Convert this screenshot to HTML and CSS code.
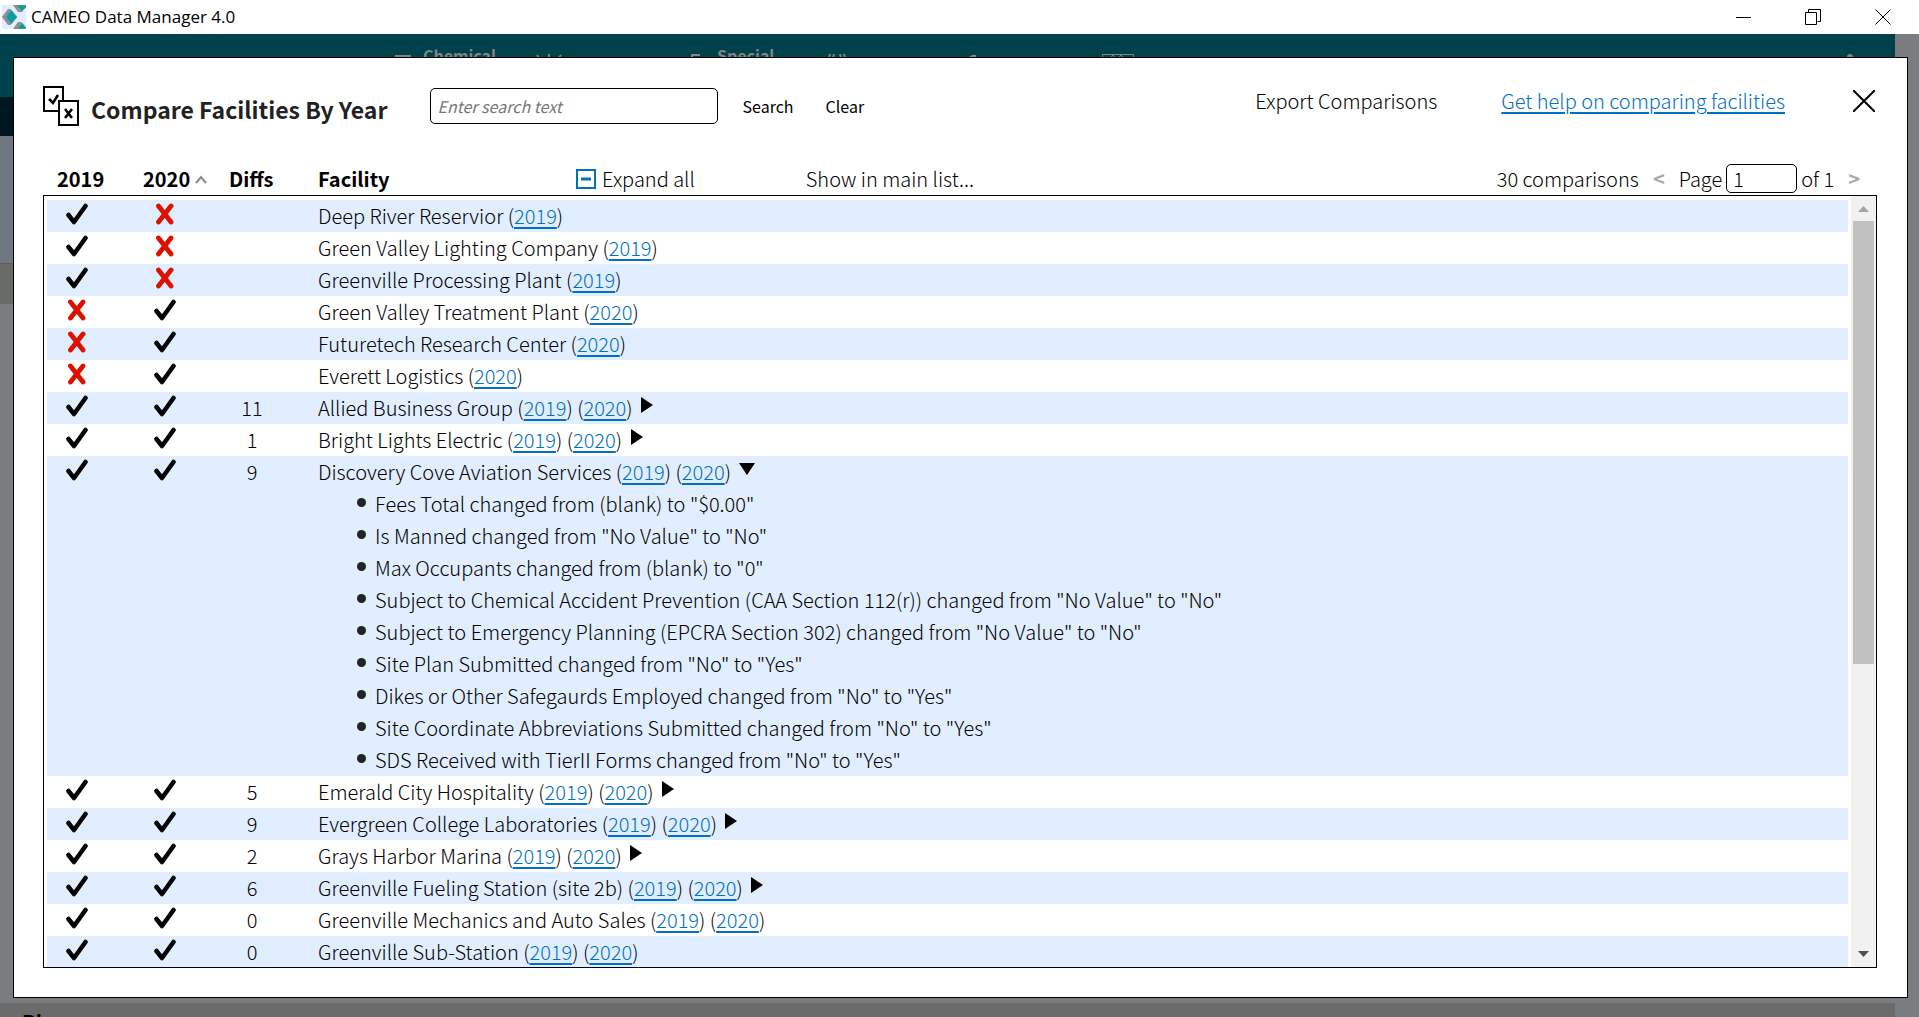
FILE: index.html
```
<!DOCTYPE html>
<html lang="en">
<head>
    <meta charset="UTF-8">
    <meta name="viewport" content="width=device-width, initial-scale=1.0">
    <title>CAMEO Data Manager 4.0</title>
    <link rel="stylesheet" href="styles.css">
</head>
<body>
    <header class="titlebar">
        <svg class="app-icon" width="24" height="24" viewBox="0 0 24 24" aria-hidden="true">
            <rect width="24" height="24" fill="#dfeeff"/>
            <path d="M6 4h3L4 12l5 8H6L0 12z" fill="#8a8f92"/>
            <path d="M9 5l6 7-6 7-5-7z" fill="#00a0a8" stroke="#7d8a8c"/>
            <path d="M11 0h3l4 5h3l-1 2h-4z" fill="#8a8f92"/>
            <path d="M14 0h10v2l-4 4z" fill="#00a0a8" stroke="#7d8a8c"/>
            <path d="M11 24l5-7h4l-5 7z" fill="#8a8f92"/>
            <path d="M15 24l5-6 4 5v1z" fill="#00a0a8" stroke="#7d8a8c"/>
        </svg>
        <span class="app-name">CAMEO Data Manager 4.0</span>
        <div class="window-buttons">
            <button type="button" aria-label="Minimize"><svg width="15" height="16" viewBox="0 0 15 16"><path d="M0 8.5h15" stroke="#000"/></svg></button>
            <button type="button" aria-label="Restore"><svg width="16" height="16" viewBox="0 0 16 16" fill="none" stroke="#000"><path d="M.5 3.500h11v12H.5zM3.500 3.500V.5h12v12h-3"/></svg></button>
            <button type="button" aria-label="Close window"><svg width="16" height="16" viewBox="0 0 16 16" stroke="#000"><path d="M.5.5l15 15M15.500.5l-15 15"/></svg></button>
        </div>
    </header>

    <main class="backdrop">
        <div class="page-nav">
            <svg width="16" height="16" viewBox="0 0 16 16" fill="none" stroke="#848484" stroke-width="2"><path d="M1 2h14v13H1z"/></svg>
            <span class="nav-name chemical">Chemical</span>
            <svg class="alert" width="28" height="20" viewBox="0 0 28 20" fill="none" stroke="#848484" stroke-width="2"><path d="M2 1l6 8M14 0v7M26 1l-6 8"/></svg>
            <svg class="flag" width="10" height="18" viewBox="0 0 10 18" fill="none" stroke="#848484" stroke-width="2"><path d="M1 18V1h8M1 6h6"/></svg>
            <span class="nav-name special">Special</span>
            <svg class="signal" width="20" height="18" viewBox="0 0 20 18" fill="none" stroke="#848484" stroke-width="2"><path d="M3 0L1 8M7 0L5 8M13 0l2 8M17 0l2 8M10 3v6"/></svg>
            <svg class="pen" width="10" height="18" viewBox="0 0 10 18" fill="#848484"><path d="M0 5l6-4h4v10H0z"/></svg>
            <svg class="map" width="32" height="20" viewBox="0 0 32 20" fill="none" stroke="#848484"><path d="M.5.5h31v19H.5zM7 6l4-5 4 5 4-5 4 5"/></svg>
            <svg class="user" width="6" height="12" viewBox="0 0 6 12" fill="#848484"><circle cx="3" cy="3" r="3"/></svg>
        </div>
        <div class="page-subnav"></div>
        <div class="page-side"></div>
        <div class="page-row"></div>
        <div class="page-footer"><b>Ri</b></div>

        <section class="modal">
            <div class="modal-head">
                <svg class="compare-icon" width="36" height="40" viewBox="0 0 36 40" fill="none" stroke="#000" stroke-width="2">
                    <path d="M1 1h19v24H1z"/>
                    <path d="M16 15h19v24H16z" fill="#fff"/>
                    <path d="M6 13l4 4 5-8M22 23l7 9M29 23l-7 9" stroke-width="2.500"/>
                </svg>
                <h1>Compare Facilities By Year</h1>
                <form class="search">
                    <input type="text" placeholder="Enter search text" aria-label="Search text">
                    <button type="button">Search</button>
                    <button type="button">Clear</button>
                </form>
                <div class="head-links">
                    <button type="button">Export Comparisons</button>
                    <a href="#">Get help on comparing facilities</a>
                    <button type="button" aria-label="Close"><svg width="22" height="22" viewBox="0 0 22 22" stroke="#000" stroke-width="2"><path d="M0 0l22 22M22 0L0 22"/></svg></button>
                </div>
            </div>

            <div class="toolbar">
                <b class="col-year">2019</b>
                <b class="col-year">2020 <svg width="12" height="9" viewBox="0 0 12 9" fill="none" stroke="#888" stroke-width="2"><path d="M1 8l5-6 5 6"/></svg></b>
                <b class="col-diffs">Diffs</b>
                <b class="col-facility">Facility</b>
                <button type="button" class="expand"><svg width="20" height="20" viewBox="0 0 20 20" fill="none" stroke="#0071bc" stroke-width="2"><path d="M1 1h18v18H1z"/><path d="M5 10h10" stroke-width="3"/></svg>Expand all</button>
                <button type="button">Show in main list...</button>
                <div class="pager">
                    <span class="count">30 comparisons</span>
                    <button type="button" class="step">&lt;</button>
                    <label for="page">Page</label>
                    <input type="text" id="page" value="1">
                    <span>of 1</span>
                    <button type="button" class="step">&gt;</button>
                </div>
            </div>

            <div class="list">
                <div class="rows">
                    <table>
                        <tbody id="facilities"></tbody>
                    </table>
                </div>
                <div class="scrollbar">
                    <svg width="11" height="6" viewBox="0 0 11 6"><path d="M5.500 0L11 6H0z" fill="#a3a3a3"/></svg>
                    <div class="thumb"></div>
                    <svg width="11" height="6" viewBox="0 0 11 6"><path d="M0 0h11L5.500 6z" fill="#505050"/></svg>
                </div>
            </div>
        </section>
    </main>

    <script src="script.js"></script>
</body>
</html>
```
FILE: styles.css
```
* {
    box-sizing: border-box;
}
body {
    margin: 0;
    height: 100vh;
    display: flex;
    flex-direction: column;
    overflow: hidden;
    font-family: "Noto Sans CJK SC", "Source Sans Pro", sans-serif;
    font-size: 20px;
    font-weight: 300;
    line-height: 32px;
    color: #000;
}
b {
    font-weight: 700;
}
button {
    font: inherit;
    color: #000;
    background: none;
    border: 0;
    padding: 0;
    cursor: pointer;
}
svg {
    flex: none;
}
a {
    color: #0071c4;
    text-decoration-thickness: 2px;
    text-underline-offset: 3px;
}

/* window frame */
.titlebar {
    height: 34px;
    flex: none;
    display: flex;
    align-items: center;
    padding: 0 10px 0 2px;
    background: #fff;
}
.app-name {
    margin-left: 5px;
    font-family: "Open Sans", "Noto Sans", sans-serif;
    font-size: 17px;
    font-weight: 400;
    color: #000;
}
.window-buttons {
    margin-left: auto;
    display: flex;
    gap: 18px;
}
.window-buttons button {
    width: 52px;
    height: 32px;
    display: flex;
    align-items: center;
    justify-content: center;
}

/* dimmed page behind the dialog */
.backdrop {
    flex: 1;
    min-height: 0;
    position: relative;
    display: flex;
    flex-direction: column;
    background: #7a7d80;
}
.page-nav {
    flex: none;
    height: 63px;
    margin-right: 24px;
    padding: 20px 42px 0 395px;
    display: flex;
    align-items: flex-start;
    background: #00414b;
}
.nav-name {
    width: 72px;
    margin-top: -15px;
    font-weight: bold;
    font-size: 16px;
    color: #848484;
}
.chemical {
    margin-left: 12px;
}
.alert {
    margin-left: 40px;
}
.flag {
    margin-left: 128px;
}
.special {
    margin-left: 16px;
}
.signal {
    margin-left: 38px;
}
.pen {
    margin-left: 119px;
}
.map {
    margin-left: 126px;
}
.user {
    margin-left: auto;
}
.page-subnav {
    flex: none;
    height: 39px;
    margin-right: 24px;
    background: #001722;
}
.page-side {
    flex: none;
    height: 127px;
    margin-right: 24px;
    background: #6f7780;
}
.page-row {
    flex: none;
    height: 41px;
    margin-right: 24px;
    border-top: 1px solid #5c5e5e;
    background: #696b69;
}
.page-footer {
    flex: none;
    height: 14px;
    margin-top: auto;
    margin-right: 24px;
    padding: 3px 22px;
    overflow: hidden;
    background: #6a6b6a;
}

/* dialog */
.modal {
    position: absolute;
    inset: 23px 11px 19px 13px;
    display: flex;
    flex-direction: column;
    padding: 0 30px 29px 29px;
    background: #fff;
    border: 1px solid #000;
}
.modal-head {
    display: flex;
    align-items: center;
    height: 96px;
}
h1 {
    margin: 6px 43px 0 12px;
    font-size: 23px;
    line-height: 32px;
    color: #222;
}
.search {
    display: flex;
    align-items: center;
    gap: 32px;
    font-size: 16px;
    font-weight: 400;
}
input {
    font: inherit;
    border: 1px solid #000;
    border-radius: 5px;
    background: #fff;
}
.search input {
    width: 288px;
    height: 36px;
    margin-right: -8px;
    padding: 0 6px;
}
.search input::placeholder {
    font-style: italic;
    color: #777;
}
.head-links {
    margin-left: auto;
    display: flex;
    align-items: center;
    gap: 64px;
    padding: 0 2px 10px 0;
}
.head-links a {
    margin-right: 4px;
}
.head-links svg {
    display: block;
}

.toolbar {
    display: flex;
    align-items: center;
    height: 41px;
    padding-top: 8px;
}
.col-year {
    width: 86px;
    padding-left: 14px;
    white-space: nowrap;
}
.col-year svg {
    vertical-align: 3px;
}
.col-diffs {
    width: 103px;
    padding-left: 14px;
}
.col-facility {
    width: 258px;
}
.expand {
    display: flex;
    align-items: center;
    gap: 6px;
    margin-right: 111px;
}
.pager {
    margin-left: auto;
    display: flex;
    align-items: center;
    padding-right: 3px;
}
.pager input {
    width: 71px;
    height: 29px;
    margin: 0 4px;
    padding: 0 6px;
}
.pager .step {
    margin: 0 14px;
    font-weight: bold;
    color: #aaa;
}

/* comparison list */
.list {
    flex: 1;
    min-height: 0;
    display: flex;
    border: 1px solid #000;
}
.rows {
    flex: 1;
    overflow: hidden;
    padding: 4px 3px 0 3px;
}
table {
    width: 100%;
    table-layout: fixed;
    border-collapse: collapse;
}
td {
    padding: 0;
    vertical-align: top;
}
tr:nth-child(odd) {
    background: #e1eeff;
}
.mark {
    width: 88px;
    padding-left: 18px;
}
.mark svg {
    display: block;
    margin-top: 3px;
}
.diffs {
    width: 95px;
    padding-right: 37px;
    text-align: center;
}
.toggle {
    margin-left: 4px;
    vertical-align: top;
}
.toggle svg {
    display: block;
    margin-top: 5px;
}
ul {
    margin: 0;
    padding-left: 39px;
    list-style: none;
}
li {
    display: flex;
    gap: 9px;
}
li::before {
    content: "";
    width: 9px;
    height: 9px;
    margin-top: 10px;
    border-radius: 50%;
    background: #222;
}
.scrollbar {
    width: 25px;
    display: flex;
    flex-direction: column;
    align-items: center;
    justify-content: space-between;
    padding: 10px 2px;
    background: #f1f1f1;
}
.scrollbar .thumb {
    align-self: stretch;
    height: 443px;
    margin: 9px 0 auto;
    background: #c1c1c1;
}
```
FILE: script.js
```
const facilities = [
    { name: "Deep River Reservior", years: [2019] },
    { name: "Green Valley Lighting Company", years: [2019] },
    { name: "Greenville Processing Plant", years: [2019] },
    { name: "Green Valley Treatment Plant", years: [2020] },
    { name: "Futuretech Research Center", years: [2020] },
    { name: "Everett Logistics", years: [2020] },
    { name: "Allied Business Group", years: [2019, 2020], diffs: 11 },
    { name: "Bright Lights Electric", years: [2019, 2020], diffs: 1 },
    {
        name: "Discovery Cove Aviation Services", years: [2019, 2020], diffs: 9,
        changes: [
            'Fees Total changed from (blank) to "$0.00"',
            'Is Manned changed from "No Value" to "No"',
            'Max Occupants changed from (blank) to "0"',
            'Subject to Chemical Accident Prevention (CAA Section 112(r)) changed from "No Value" to "No"',
            'Subject to Emergency Planning (EPCRA Section 302) changed from "No Value" to "No"',
            'Site Plan Submitted changed from "No" to "Yes"',
            'Dikes or Other Safegaurds Employed changed from "No" to "Yes"',
            'Site Coordinate Abbreviations Submitted changed from "No" to "Yes"',
            'SDS Received with TierII Forms changed from "No" to "Yes"'
        ]
    },
    { name: "Emerald City Hospitality", years: [2019, 2020], diffs: 5 },
    { name: "Evergreen College Laboratories", years: [2019, 2020], diffs: 9 },
    { name: "Grays Harbor Marina", years: [2019, 2020], diffs: 2 },
    { name: "Greenville Fueling Station (site 2b)", years: [2019, 2020], diffs: 6 },
    { name: "Greenville Mechanics and Auto Sales", years: [2019, 2020], diffs: 0 },
    { name: "Greenville Sub-Station", years: [2019, 2020], diffs: 0 }
];

const check = '<svg width="24" height="22" viewBox="0 0 24 22" fill="none" stroke="#000" stroke-width="4.500" stroke-linecap="round" stroke-linejoin="round"><path d="M3.500 12l5.500 7L20.500 3"/></svg>';
const cross = '<svg width="24" height="22" viewBox="0 0 24 22" fill="none" stroke="#e01000" stroke-width="4.800" stroke-linecap="round"><path d="M5.500 3L18 19M18 3L5.500 19"/></svg>';
const closed = '<svg width="12" height="16" viewBox="0 0 12 16"><path d="M0 0l12 8L0 16z"/></svg>';
const open = '<svg width="16" height="16" viewBox="0 0 16 16"><path d="M0 2h16L8 14z"/></svg>';

function row(f) {
    const marks = [2019, 2020].map(y => `<td class="mark">${f.years.includes(y) ? check : cross}</td>`).join("");
    const links = f.years.map(y => `(<a href="#">${y}</a>)`).join(" ");
    const toggle = f.diffs ? `<button type="button" class="toggle" aria-label="Show changes">${f.changes ? open : closed}</button>` : "";
    const changes = f.changes ? `<ul>${f.changes.map(c => `<li>${c}</li>`).join("")}</ul>` : "";
    return `<tr>${marks}<td class="diffs">${f.diffs ?? ""}</td><td>${f.name} ${links} ${toggle}${changes}</td></tr>`;
}

document.getElementById("facilities").innerHTML = facilities.map(row).join("");
```
